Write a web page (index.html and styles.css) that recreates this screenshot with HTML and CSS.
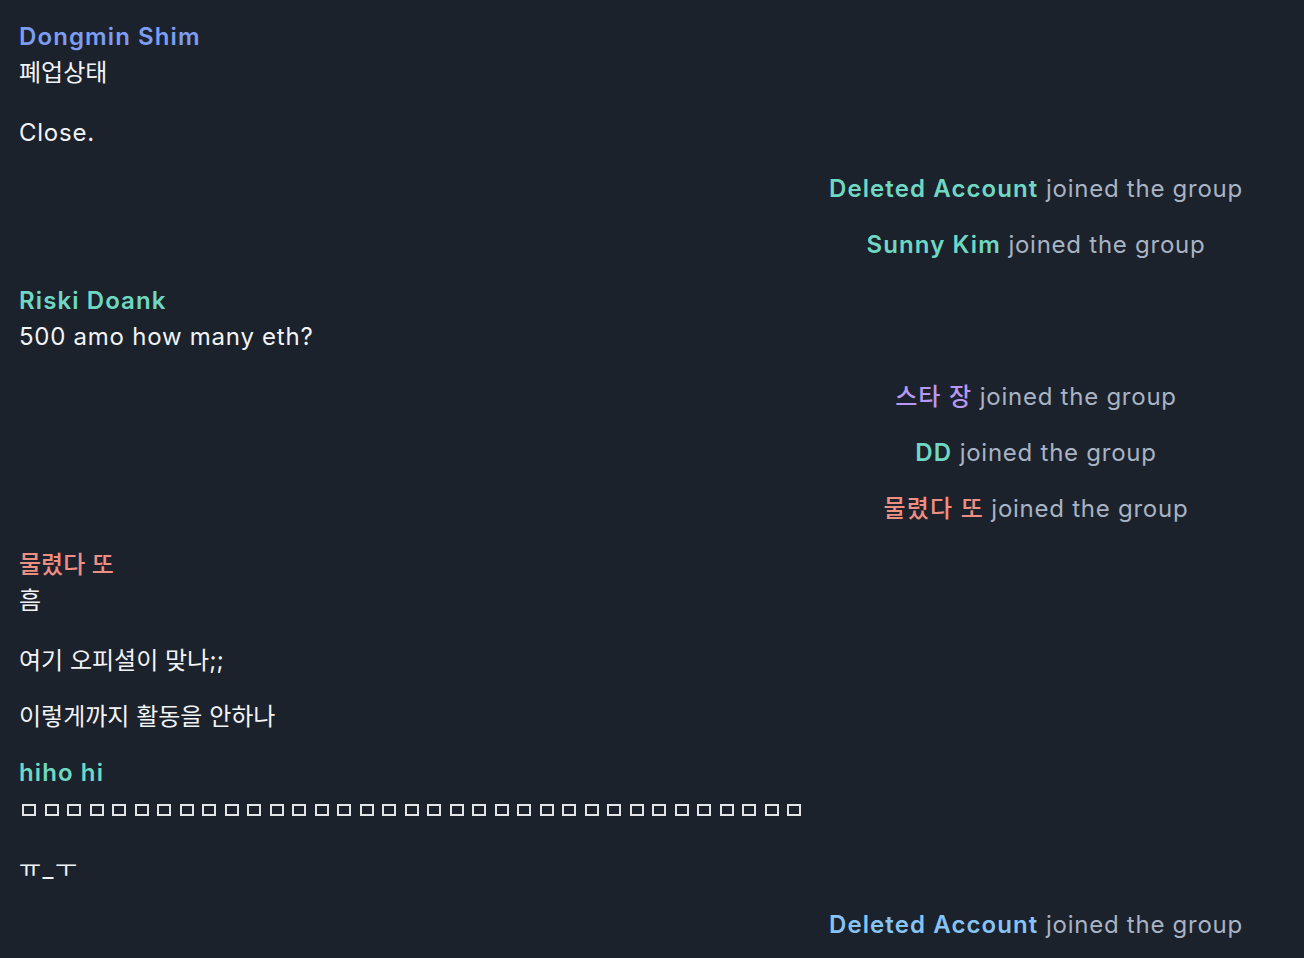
FILE: index.html
```html
<!DOCTYPE html>
<html lang="ko">
<head>
<meta charset="utf-8">
<title>Chat</title>
<link rel="stylesheet" href="styles.css">
</head>
<body>
<main class="chat">
  <section class="msg">
    <div class="name c-blue">Dongmin Shim</div>
    <p class="line ko">폐업상태</p>
    <p class="line extra">Close.</p>
  </section>

  <div class="service"><span class="who c-teal">Deleted Account</span> joined the group</div>
  <div class="service"><span class="who c-teal">Sunny Kim</span> joined the group</div>

  <section class="msg">
    <div class="name c-teal">Riski Doank</div>
    <p class="line">500 amo how many eth?</p>
  </section>

  <div class="service extra"><span class="who ko c-purple">스타 장</span> joined the group</div>
  <div class="service"><span class="who c-teal">DD</span> joined the group</div>
  <div class="service"><span class="who ko c-salmon">물렸다 또</span> joined the group</div>

  <section class="msg">
    <div class="name ko c-salmon">물렸다 또</div>
    <p class="line ko">흠</p>
    <p class="line ko extra">여기 오피셜이 맞나;;</p>
    <p class="line ko">이렇게까지 활동을 안하나</p>
  </section>

  <section class="msg">
    <div class="name c-teal">hiho hi</div>
    <p class="line tofu-line" aria-label="unrenderable characters"><span class="tofu"></span><span class="tofu"></span><span class="tofu"></span><span class="tofu"></span><span class="tofu"></span><span class="tofu"></span><span class="tofu"></span><span class="tofu"></span><span class="tofu"></span><span class="tofu"></span><span class="tofu"></span><span class="tofu"></span><span class="tofu"></span><span class="tofu"></span><span class="tofu"></span><span class="tofu"></span><span class="tofu"></span><span class="tofu"></span><span class="tofu"></span><span class="tofu"></span><span class="tofu"></span><span class="tofu"></span><span class="tofu"></span><span class="tofu"></span><span class="tofu"></span><span class="tofu"></span><span class="tofu"></span><span class="tofu"></span><span class="tofu"></span><span class="tofu"></span><span class="tofu"></span><span class="tofu"></span><span class="tofu"></span><span class="tofu"></span><span class="tofu"></span></p>
    <p class="line ko extra tt">ㅠ_ㅜ</p>
  </section>

  <div class="service"><span class="who c-sky">Deleted Account</span> joined the group</div>
</main>
</body>
</html>
```

FILE: styles.css
```css
html, body {
  margin: 0;
  padding: 0;
  background: #1c222c;
}

body {
  font-family: "Inter", "Noto Sans CJK KR", sans-serif;
  font-size: 24px;
  line-height: 36px;
  letter-spacing: 0.75px;
  color: #f2f3f5;
}

.chat {
  display: flex;
  flex-direction: column;
  gap: 20px;
  padding: 19px 19px;
}

.msg {
  display: flex;
  flex-direction: column;
}

.name {
  font-weight: 600;
  letter-spacing: 1.1px;
}

.ko,
.name.ko {
  letter-spacing: 0;
}

.name.ko,
.who.ko {
  font-weight: 500;
}

.line {
  margin: 0;
}

.msg .line + .line {
  margin-top: 20px;
}

.msg .line.extra {
  margin-top: 24px;
}

.service.extra {
  margin-top: 4px;
}

.service {
  margin-left: 749px;
  width: 536px;
  text-align: center;
  color: #a8b3c3;
}

.who {
  font-weight: 600;
  letter-spacing: 1.1px;
}

.c-blue { color: #7c9df2; }
.c-teal { color: #6fd8c2; }
.c-purple { color: #b898f4; }
.c-salmon { color: #f08e82; }
.c-sky { color: #85c4f4; }

.tofu-line {
  display: flex;
  align-items: center;
  gap: 8.5px;
  height: 36px;
  padding-left: 3px;
}

.tofu {
  display: inline-block;
  box-sizing: border-box;
  width: 14px;
  height: 12px;
  border: 2px solid #e2e4e8;
  margin-top: 2px;
}

.tt {
  letter-spacing: 1.5px;
}
```
